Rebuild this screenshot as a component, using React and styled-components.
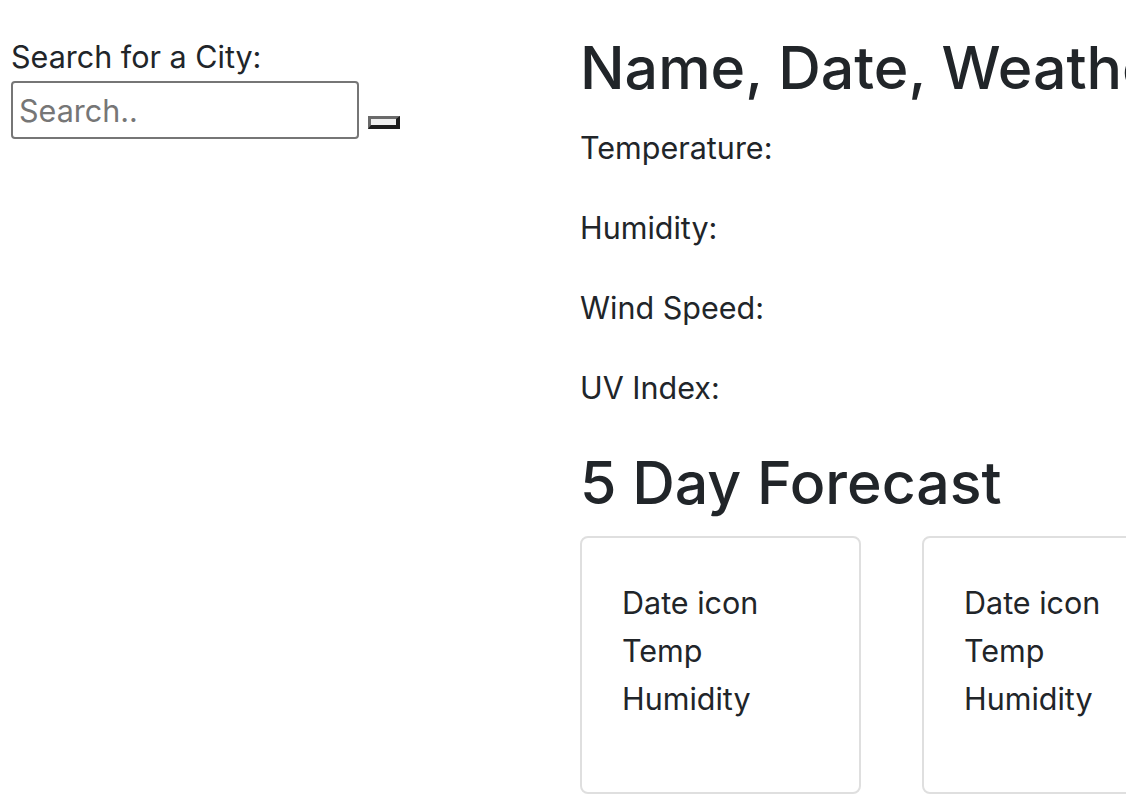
import React from 'react'
import styled, { createGlobalStyle } from 'styled-components'

const GlobalStyle = createGlobalStyle`
  html, body {
    margin: 0;
    padding: 0;
    background: #fff;
    overflow: hidden;
  }
  body {
    font-family: Inter, "Noto Sans", "Liberation Sans", sans-serif;
    font-size: 30.5px;
    line-height: 48px;
    color: #212529;
  }
  * { box-sizing: border-box; }
`

const Page = styled.div`
  display: flex;
  width: 1126px;
  height: 800px;
  overflow: hidden;
`

const SearchColumn = styled.div`
  flex: 0 0 580px;
  padding: 33px 0 0 11px;
`

const Label = styled.label`
  display: block;
  line-height: 48px;
`

const SearchRow = styled.div`
  display: flex;
  align-items: flex-start;
  gap: 9px;
`

const SearchInput = styled.input`
  width: 348px;
  height: 58px;
  margin: 0;
  padding: 2px 6px;
  border: 2px solid #767676;
  border-radius: 4px;
  font-family: inherit;
  font-size: 30.5px;
  line-height: 48px;
  color: #212529;
  outline: none;
  &::placeholder { color: #767676; }
`

const SearchButton = styled.button`
  width: 32px;
  height: 13px;
  margin-top: 35px;
  padding: 0;
  background: #efefef;
  border-style: solid;
  border-width: 3px 4px 4px 3px;
  border-color: #6a6a6a #1c1c1c #1c1c1c #6a6a6a;
  cursor: pointer;
`

const WeatherColumn = styled.div`
  flex: 1 0 auto;
  padding-top: 33px;
  white-space: nowrap;
`

const Heading = styled.h1`
  margin: ${p => p.$gap || 0}px 0 ${p => p.$after}px;
  font-size: 59px;
  font-weight: 500;
  line-height: 1.2;
`

const Stat = styled.p`
  margin: 0 0 32px;
  line-height: 48px;
`

const Cards = styled.div`
  display: flex;
  gap: 61px;
`

const Card = styled.div`
  flex: 0 0 281px;
  height: 258px;
  padding: 41px 32px 0 40px;
  border: 2px solid #dfdfdf;
  border-radius: 8px;
`

const CardLine = styled.div`
  line-height: 48px;
`

const stats = ['Temperature:', 'Humidity:', 'Wind Speed:', 'UV Index:']
const days = [1, 2, 3, 4, 5]

export default function App() {
  return (
    <>
      <GlobalStyle />
      <Page>
        <SearchColumn>
          <Label htmlFor="city">Search for a City:</Label>
          <SearchRow>
            <SearchInput id="city" type="text" placeholder="Search.." />
            <SearchButton type="button" />
          </SearchRow>
        </SearchColumn>
        <WeatherColumn>
          <Heading as="h2" $after={20}>Name, Date, Weather icon</Heading>
          {stats.map(s => (
            <Stat key={s}>{s}</Stat>
          ))}
          <Heading $gap={36} $after={17}>5 Day Forecast</Heading>
          <Cards>
            {days.map(d => (
              <Card key={d}>
                <CardLine>Date icon</CardLine>
                <CardLine>Temp</CardLine>
                <CardLine>Humidity</CardLine>
              </Card>
            ))}
          </Cards>
        </WeatherColumn>
      </Page>
    </>
  )
}
